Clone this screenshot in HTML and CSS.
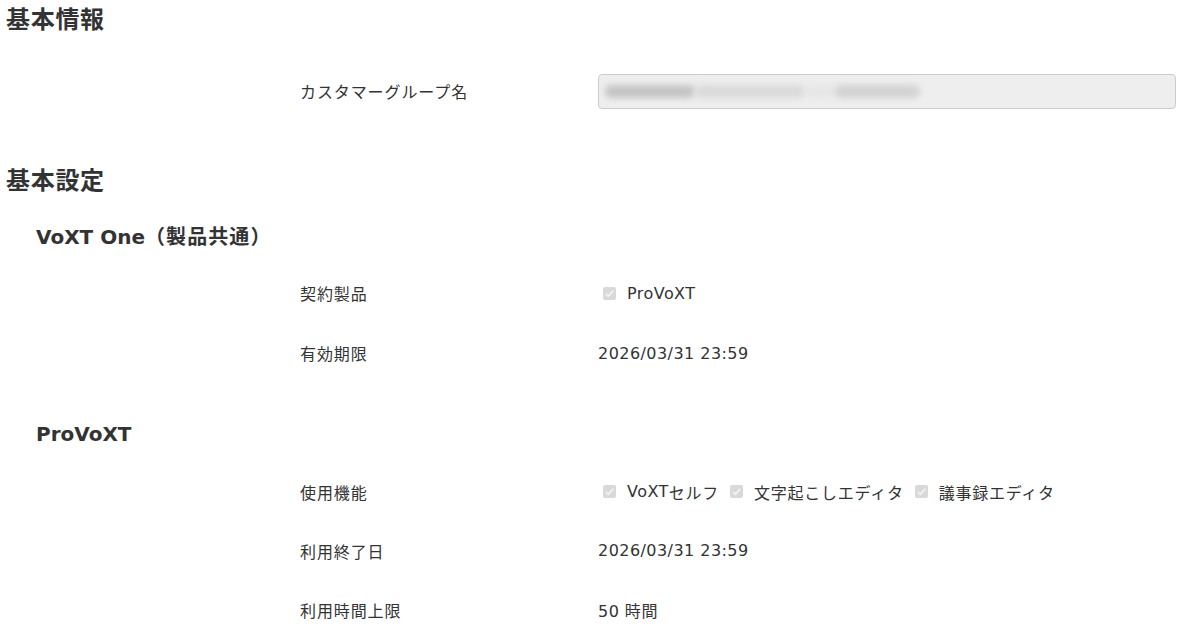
FILE: index.html
```html
<!DOCTYPE html>
<html lang="ja">
<head>
<meta charset="utf-8">
<link rel="stylesheet" href="styles.css">
</head>
<body>
<div class="page">
  <h2 class="h-main">基本情報</h2>
  <div class="row row-first">
    <div class="label">カスタマーグループ名</div>
    <div class="value">
      <div class="input">
        <span class="blur b1"></span><span class="blur b2"></span><span class="blur b3"></span><span class="blur b4"></span>
      </div>
    </div>
  </div>

  <h2 class="h-main h-second">基本設定</h2>
  <h3 class="h-sub">VoXT One<span class="hj">（製品共通）</span></h3>
  <div class="row">
    <div class="label">契約製品</div>
    <div class="value checks">
      <span class="chk"><svg class="box" width="13" height="13" viewBox="0 0 13 13"><rect x="0" y="0" width="13" height="13" rx="2" fill="#d9d9d9"/><path d="M3 6.8 L5.4 9.2 L10.2 3.8" fill="none" stroke="#f2f2f2" stroke-width="1.8"/></svg>ProVoXT</span>
    </div>
  </div>
  <div class="row">
    <div class="label">有効期限</div>
    <div class="value">2026/03/31 23:59</div>
  </div>

  <h3 class="h-sub h-sub2">ProVoXT</h3>
  <div class="row row-b">
    <div class="label">使用機能</div>
    <div class="value checks">
      <span class="chk"><svg class="box" width="13" height="13" viewBox="0 0 13 13"><rect x="0" y="0" width="13" height="13" rx="2" fill="#d9d9d9"/><path d="M3 6.8 L5.4 9.2 L10.2 3.8" fill="none" stroke="#f2f2f2" stroke-width="1.8"/></svg>VoXT<span class="j">セルフ</span></span>
      <span class="chk"><svg class="box" width="13" height="13" viewBox="0 0 13 13"><rect x="0" y="0" width="13" height="13" rx="2" fill="#d9d9d9"/><path d="M3 6.8 L5.4 9.2 L10.2 3.8" fill="none" stroke="#f2f2f2" stroke-width="1.8"/></svg><span class="j">文字起こしエディタ</span></span>
      <span class="chk"><svg class="box" width="13" height="13" viewBox="0 0 13 13"><rect x="0" y="0" width="13" height="13" rx="2" fill="#d9d9d9"/><path d="M3 6.8 L5.4 9.2 L10.2 3.8" fill="none" stroke="#f2f2f2" stroke-width="1.8"/></svg><span class="j">議事録エディタ</span></span>
    </div>
  </div>
  <div class="row row-b">
    <div class="label">利用終了日</div>
    <div class="value">2026/03/31 23:59</div>
  </div>
  <div class="row row-b">
    <div class="label">利用時間上限</div>
    <div class="value">50 <span class="j">時間</span></div>
  </div>
</div>
</body>
</html>
```

FILE: styles.css
```css
html, body {
  margin: 0;
  padding: 0;
  background: #ffffff;
}
body {
  font-family: "DejaVu Sans", "Noto Sans CJK JP", sans-serif;
  color: #333333;
  font-size: 16px;
  overflow: hidden;
}
.page {
  padding: 0 5px 0 6px;
}
.h-main {
  margin: 0;
  font-size: 24px;
  font-weight: bold;
  line-height: 40px;
  height: 40px;
  letter-spacing: 0.7px;
}
.h-second {
  margin-top: 40px;
}
.h-sub {
  margin: 21px 0 11px 30px;
  font-size: 20px;
  font-weight: bold;
  line-height: 30px;
  height: 30px;
}
.hj {
  letter-spacing: 1.1px;
}
.h-sub2 {
  margin-top: 36px;
  margin-bottom: 13px;
}
.row {
  display: grid;
  grid-template-columns: 298px 1fr;
  align-items: center;
  height: 60px;
  padding-left: 294px;
}
.row-first {
  margin-top: 21px;
}
.row-b {
  height: 59px;
}
.label {
  font-size: 16px;
  letter-spacing: 0.9px;
}
.value {
  font-size: 16px;
  letter-spacing: 0.45px;
}
.j {
  letter-spacing: 0.75px;
}
.input {
  height: 33px;
  background: #eeeeee;
  border: 1px solid #cccccc;
  border-radius: 4px;
  display: flex;
  align-items: center;
  padding-left: 6px;
  overflow: hidden;
}
.blur {
  display: inline-block;
  height: 13px;
  border-radius: 6px;
  filter: blur(3px);
}
.b1 { width: 90px; background: #c4c4c4; }
.b2 { width: 110px; background: #dadada; }
.b3 { width: 30px; background: #e6e6e6; }
.b4 { width: 85px; background: #d2d2d2; }
.checks {
  display: flex;
  align-items: center;
  gap: 6px;
}
.chk {
  display: inline-flex;
  align-items: center;
}
.box {
  margin: 0 11px 0 5px;
  flex: none;
}
```
